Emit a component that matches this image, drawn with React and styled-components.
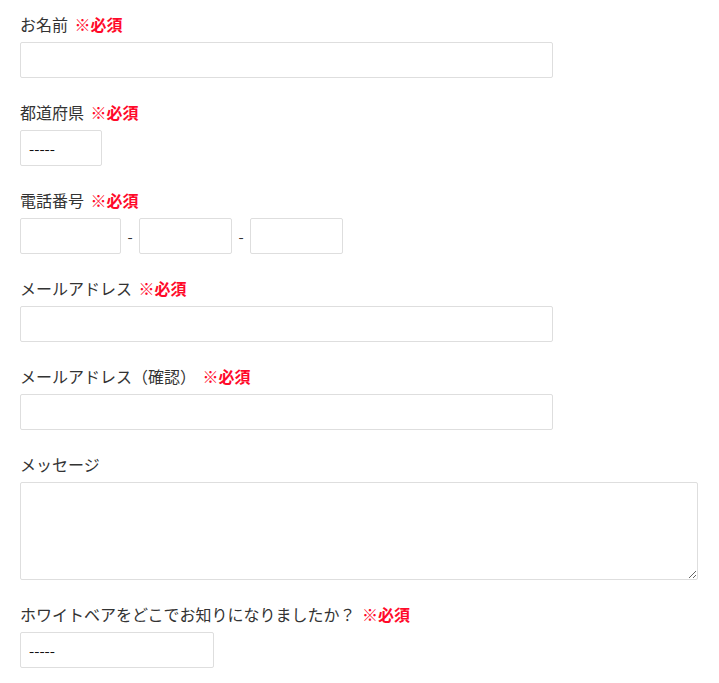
import React from 'react';
import styled, { createGlobalStyle } from 'styled-components';

const GlobalStyle = createGlobalStyle`
    body {
        margin: 0;
        background: #fff;
        font-family: "Noto Sans CJK JP", "Noto Sans", sans-serif;
        color: #333;
    }
`;

const Form = styled.form`
    padding: 12px 20px 20px;
`;
const Field = styled.div`
    margin-bottom: 22px;
`;
const Label = styled.label`
    display: block;
    font-size: 16px;
    line-height: 24px;
    margin-bottom: 6px;
    color: #333;
`;
const Required = styled.span`
    margin-left: 3px;
    color: #ff0a2a;
    font-weight: 700;
`;
const TextInput = styled.input`
    display: block;
    box-sizing: border-box;
    width: ${p => p.$width || 533}px;
    height: 36px;
    margin: 0;
    padding: 4px 10px;
    border: 1px solid #dedede;
    border-radius: 2px;
    background: #fff;
    font-size: 15px;
    font-family: inherit;
    outline: none;
`;
const Select = styled.select`
    display: block;
    box-sizing: border-box;
    width: ${p => p.$width}px;
    height: 36px;
    margin: 0;
    padding: 0 8px;
    border: 1px solid #dedede;
    border-radius: 2px;
    background: #fff;
    color: #111;
    font-size: 15px;
    font-family: inherit;
    appearance: none;
    outline: none;
`;
const TelRow = styled.div`
    display: flex;
    align-items: center;
`;
const Dash = styled.span`
    width: 18px;
    text-align: center;
    font-size: 15px;
    color: #333;
`;
const TextArea = styled.textarea`
    display: block;
    box-sizing: border-box;
    width: 678px;
    height: 98px;
    margin: 0;
    padding: 6px 10px;
    border: 1px solid #dedede;
    border-radius: 2px;
    font-size: 15px;
    font-family: inherit;
    outline: none;
`;

const Req = () => <Required>※必須</Required>;

export default function App() {
    return (
        <>
            <GlobalStyle />
            <Form>
                <Field>
                    <Label>お名前 <Req /></Label>
                    <TextInput type="text" />
                </Field>
                <Field>
                    <Label>都道府県 <Req /></Label>
                    <Select $width={82} defaultValue="">
                        <option value="">-----</option>
                    </Select>
                </Field>
                <Field>
                    <Label>電話番号 <Req /></Label>
                    <TelRow>
                        <TextInput type="tel" $width={101} />
                        <Dash>-</Dash>
                        <TextInput type="tel" $width={93} />
                        <Dash>-</Dash>
                        <TextInput type="tel" $width={93} />
                    </TelRow>
                </Field>
                <Field>
                    <Label>メールアドレス <Req /></Label>
                    <TextInput type="email" />
                </Field>
                <Field>
                    <Label>メールアドレス（確認） <Req /></Label>
                    <TextInput type="email" />
                </Field>
                <Field>
                    <Label>メッセージ</Label>
                    <TextArea />
                </Field>
                <Field>
                    <Label>ホワイトベアをどこでお知りになりましたか？ <Req /></Label>
                    <Select $width={194} defaultValue="">
                        <option value="">-----</option>
                    </Select>
                </Field>
            </Form>
        </>
    );
}
